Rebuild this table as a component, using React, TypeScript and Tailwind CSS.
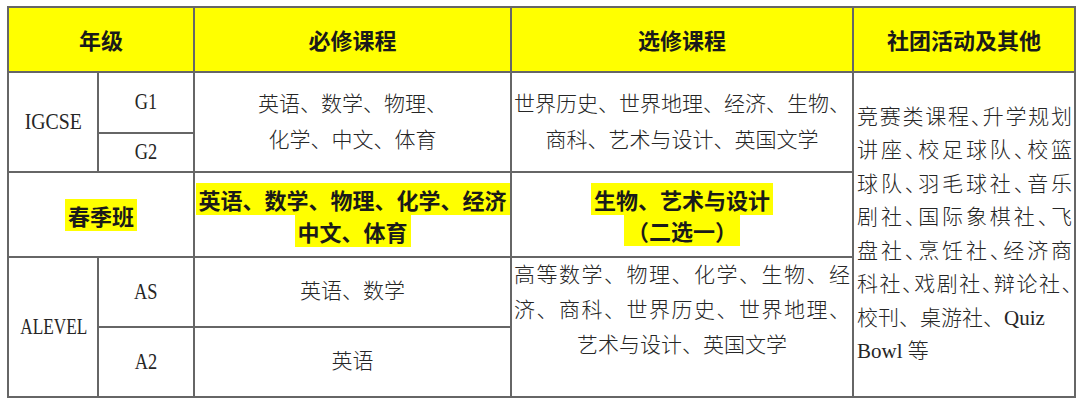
import React from "react";

const serif = "font-['Liberation_Serif','Noto_Sans_CJK_SC',serif] font-light text-[21px] text-[#262626]";
const bold = "font-['Noto_Sans_CJK_SC',sans-serif] font-bold text-[22px] text-[#1a1a1a]";
const cell = "border-2 border-[#666] p-0 align-middle text-center";

const clubLines: { text: string; justify: boolean }[] = [
  { text: "竞赛类课程、升学规划", justify: true },
  { text: "讲座、校足球队、校篮", justify: true },
  { text: "球队、羽毛球社、音乐", justify: true },
  { text: "剧社、国际象棋社、飞", justify: true },
  { text: "盘社、烹饪社、经济商", justify: true },
  { text: "科社、戏剧社、辩论社、", justify: true },
  { text: "校刊、桌游社、Quiz", justify: false },
  { text: "Bowl 等", justify: false },
];

const Mark = ({ children }: { children: React.ReactNode }) => (
  <span className="bg-[#ffff00] px-[3px] whitespace-nowrap">{children}</span>
);

// grade labels: narrow serif like the half-width latin of the original
const Label = ({ children, narrow = "scale-x-[0.8]" }: { children: React.ReactNode; narrow?: string }) => (
  <span className={`inline-block text-[23px] ${narrow}`}>{children}</span>
);

export default function App() {
  return (
    <div className="w-[1080px] h-[408px] bg-white pl-[7px] pt-[6px]">
      <table className="table-fixed border-collapse w-[1067px]">
        <colgroup>
          <col className="w-[90px]" />
          <col className="w-[96px]" />
          <col className="w-[317px]" />
          <col className="w-[342px]" />
          <col className="w-[222px]" />
        </colgroup>
        <thead>
          <tr className="h-[65px] bg-[#ffff00]">
            <th colSpan={2} className={`${cell} ${bold} text-[21px]`}>年级</th>
            <th className={`${cell} ${bold} text-[21px]`}>必修课程</th>
            <th className={`${cell} ${bold} text-[21px]`}>选修课程</th>
            <th className={`${cell} ${bold} text-[21px]`}>社团活动及其他</th>
          </tr>
        </thead>
        <tbody>
          <tr className="h-[61px]">
            <td rowSpan={2} className={`${cell} ${serif}`}>
              <Label narrow="scale-x-[0.86]">IGCSE</Label>
            </td>
            <td className={`${cell} ${serif}`}>
              <Label>G1</Label>
            </td>
            <td rowSpan={2} className={`${cell} ${serif} leading-[36px]`}>
              <div>英语、数学、物理、</div>
              <div>化学、中文、体育</div>
            </td>
            <td rowSpan={2} className={`${cell} ${serif} leading-[36px] whitespace-nowrap`}>
              <div>世界历史、世界地理、经济、生物、</div>
              <div>商科、艺术与设计、英国文学</div>
            </td>
            <td rowSpan={5} className={`${cell} ${serif} text-left leading-[33.5px] pl-[3px] pr-[2px]`}>
              {clubLines.map((line) => (
                <div
                  key={line.text}
                  className={
                    line.justify
                      ? "text-justify [text-align-last:justify] [font-feature-settings:'halt'] whitespace-nowrap"
                      : "whitespace-pre"
                  }
                >
                  {line.text}
                </div>
              ))}
            </td>
          </tr>
          <tr className="h-[39px]">
            <td className={`${cell} ${serif}`}>
              <Label>G2</Label>
            </td>
          </tr>
          <tr className="h-[85px]">
            <td colSpan={2} className={`${cell} ${bold} leading-[32px]`}>
              <Mark>春季班</Mark>
            </td>
            <td className={`${cell} ${bold} leading-[32px]`}>
              <div>
                <Mark>英语、数学、物理、化学、经济</Mark>
              </div>
              <div>
                <Mark>中文、体育</Mark>
              </div>
            </td>
            <td className={`${cell} ${bold} leading-[31px]`}>
              <div>
                <Mark>生物、艺术与设计</Mark>
              </div>
              <div>
                <Mark>（二选一）</Mark>
              </div>
            </td>
          </tr>
          <tr className="h-[70px]">
            <td rowSpan={2} className={`${cell} ${serif}`}>
              <Label narrow="scale-x-[0.75]">ALEVEL</Label>
            </td>
            <td className={`${cell} ${serif}`}>
              <Label>AS</Label>
            </td>
            <td className={`${cell} ${serif}`}>英语、数学</td>
            <td rowSpan={2} className={`${cell} ${serif} !align-top leading-[35px] px-[2px]`}>
              <div className="text-justify [text-align-last:justify] whitespace-nowrap">高等数学、物理、化学、生物、经</div>
              <div className="text-justify [text-align-last:justify] whitespace-nowrap">济、商科、世界历史、世界地理、</div>
              <div>艺术与设计、英国文学</div>
            </td>
          </tr>
          <tr className="h-[70px]">
            <td className={`${cell} ${serif}`}>
              <Label>A2</Label>
            </td>
            <td className={`${cell} ${serif}`}>英语</td>
          </tr>
        </tbody>
      </table>
    </div>
  );
}
